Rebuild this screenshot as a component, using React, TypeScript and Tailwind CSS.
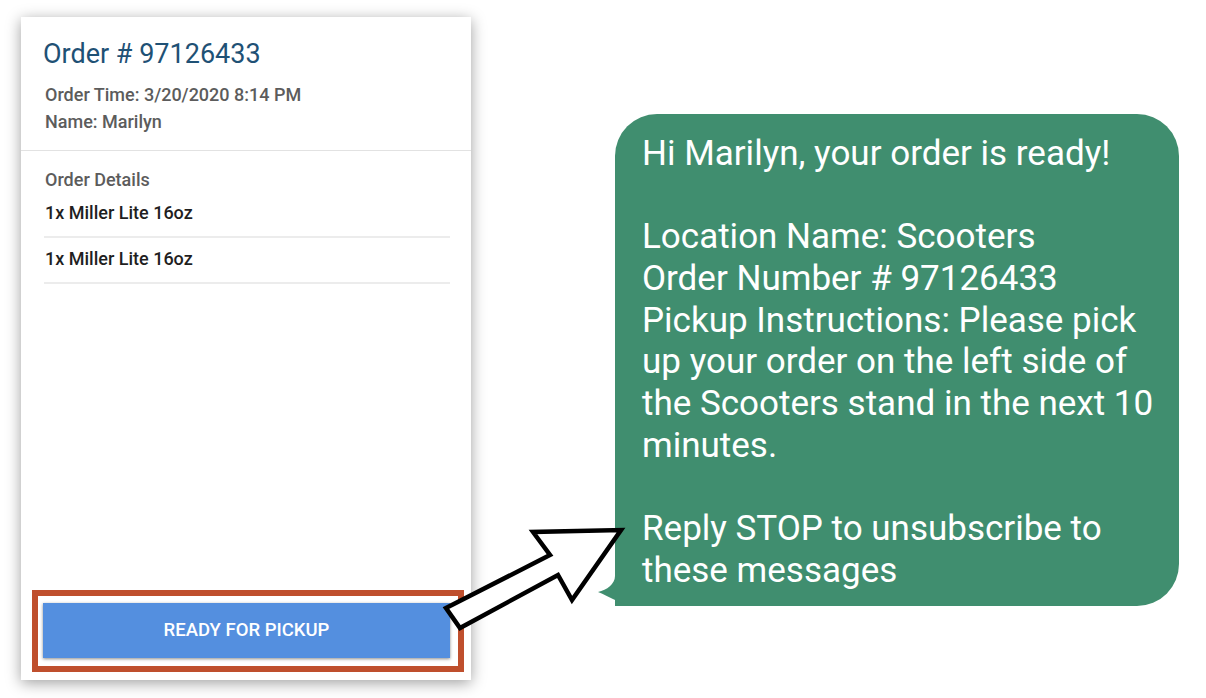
const items = ["1x Miller Lite 16oz", "1x Miller Lite 16oz"];

const message = [
  "Hi Marilyn, your order is ready!",
  "",
  "Location Name: Scooters",
  "Order Number # 97126433",
  "Pickup Instructions: Please pick",
  "up your order on the left side of",
  "the Scooters stand in the next 10",
  "minutes.",
  "",
  "Reply STOP to unsubscribe to",
  "these messages",
];

const OrderCard = () => (
  <div className="flex h-[663px] w-[450px] shrink-0 flex-col bg-white shadow-[0_3px_14px_rgba(0,0,0,0.38)]">
    <div className="px-[22px] pt-[20px] pb-[15px]">
      <h1 className="text-[27px] leading-[34px] text-[#1f5175]">Order # 97126433</h1>
      <div className="mt-[10px] pl-[2px] text-[18px] font-medium leading-[27px] text-[#5c5c5c]">
        <p>Order Time: 3/20/2020 8:14 PM</p>
        <p>Name: Marilyn</p>
      </div>
    </div>
    <div className="h-px bg-[#e2e2e2]" />
    <div className="pt-[16px] pr-[21px] pl-[23px]">
      <p className="pl-px text-[18px] font-medium leading-[25px] text-[#5c5c5c]">Order Details</p>
      {items.map((item, i) => (
        <div key={i} className="border-b-2 border-[#ececec] pt-[7px] pb-[9px] pl-px text-[18px] font-medium leading-[28px] text-[#1f1f1f]">
          {item}
        </div>
      ))}
    </div>
    <div className="flex-1" />
    <div className="mb-[8px] ml-[11px] w-[432px] border-[6px] border-[#bf4f2d] pt-[7px] pr-[8px] pb-[8px] pl-[5px]">
      <button className="flex h-[55px] w-full items-center justify-center bg-[#548fdf] text-[18.5px] font-medium text-white shadow-[0_1px_3px_rgba(0,0,0,0.45)]">
        READY FOR PICKUP
      </button>
    </div>
  </div>
);

const Bubble = () => (
  <div className="relative mt-[97px] ml-[144px] h-[492px] w-[564px] rounded-[42px] rounded-bl-none bg-[#408e6f] pt-[19px] pl-[27px] text-[35px] leading-[41.7px] text-white">
    <svg className="absolute bottom-0 left-[-20px]" width="40" height="40" viewBox="0 0 40 40">
      <path d="M20 0 L20 10 C20 18 12 24 3 26 C14 30 28 40 40 40 L40 0 Z" fill="#408e6f" />
    </svg>
    {message.map((line, i) => (
      <div key={i} className="relative h-[41.7px] whitespace-nowrap">
        {line}
      </div>
    ))}
  </div>
);

export default function App() {
  return (
    <div
      className="relative flex h-[698px] w-[1206px] items-start overflow-hidden bg-white pt-[17px] pl-[21px]"
      style={{ fontFamily: "Roboto, 'Liberation Sans', sans-serif" }}
    >
      <OrderCard />
      <Bubble />
      <svg className="pointer-events-none absolute top-0 left-0" width="1206" height="698" viewBox="0 0 1206 698">
        <polygon
          points="446,608 550,555 533,532 621,530 572,600 558,575 460,628"
          fill="white"
          stroke="black"
          strokeWidth="4.5"
          strokeLinejoin="miter"
        />
      </svg>
    </div>
  );
}
